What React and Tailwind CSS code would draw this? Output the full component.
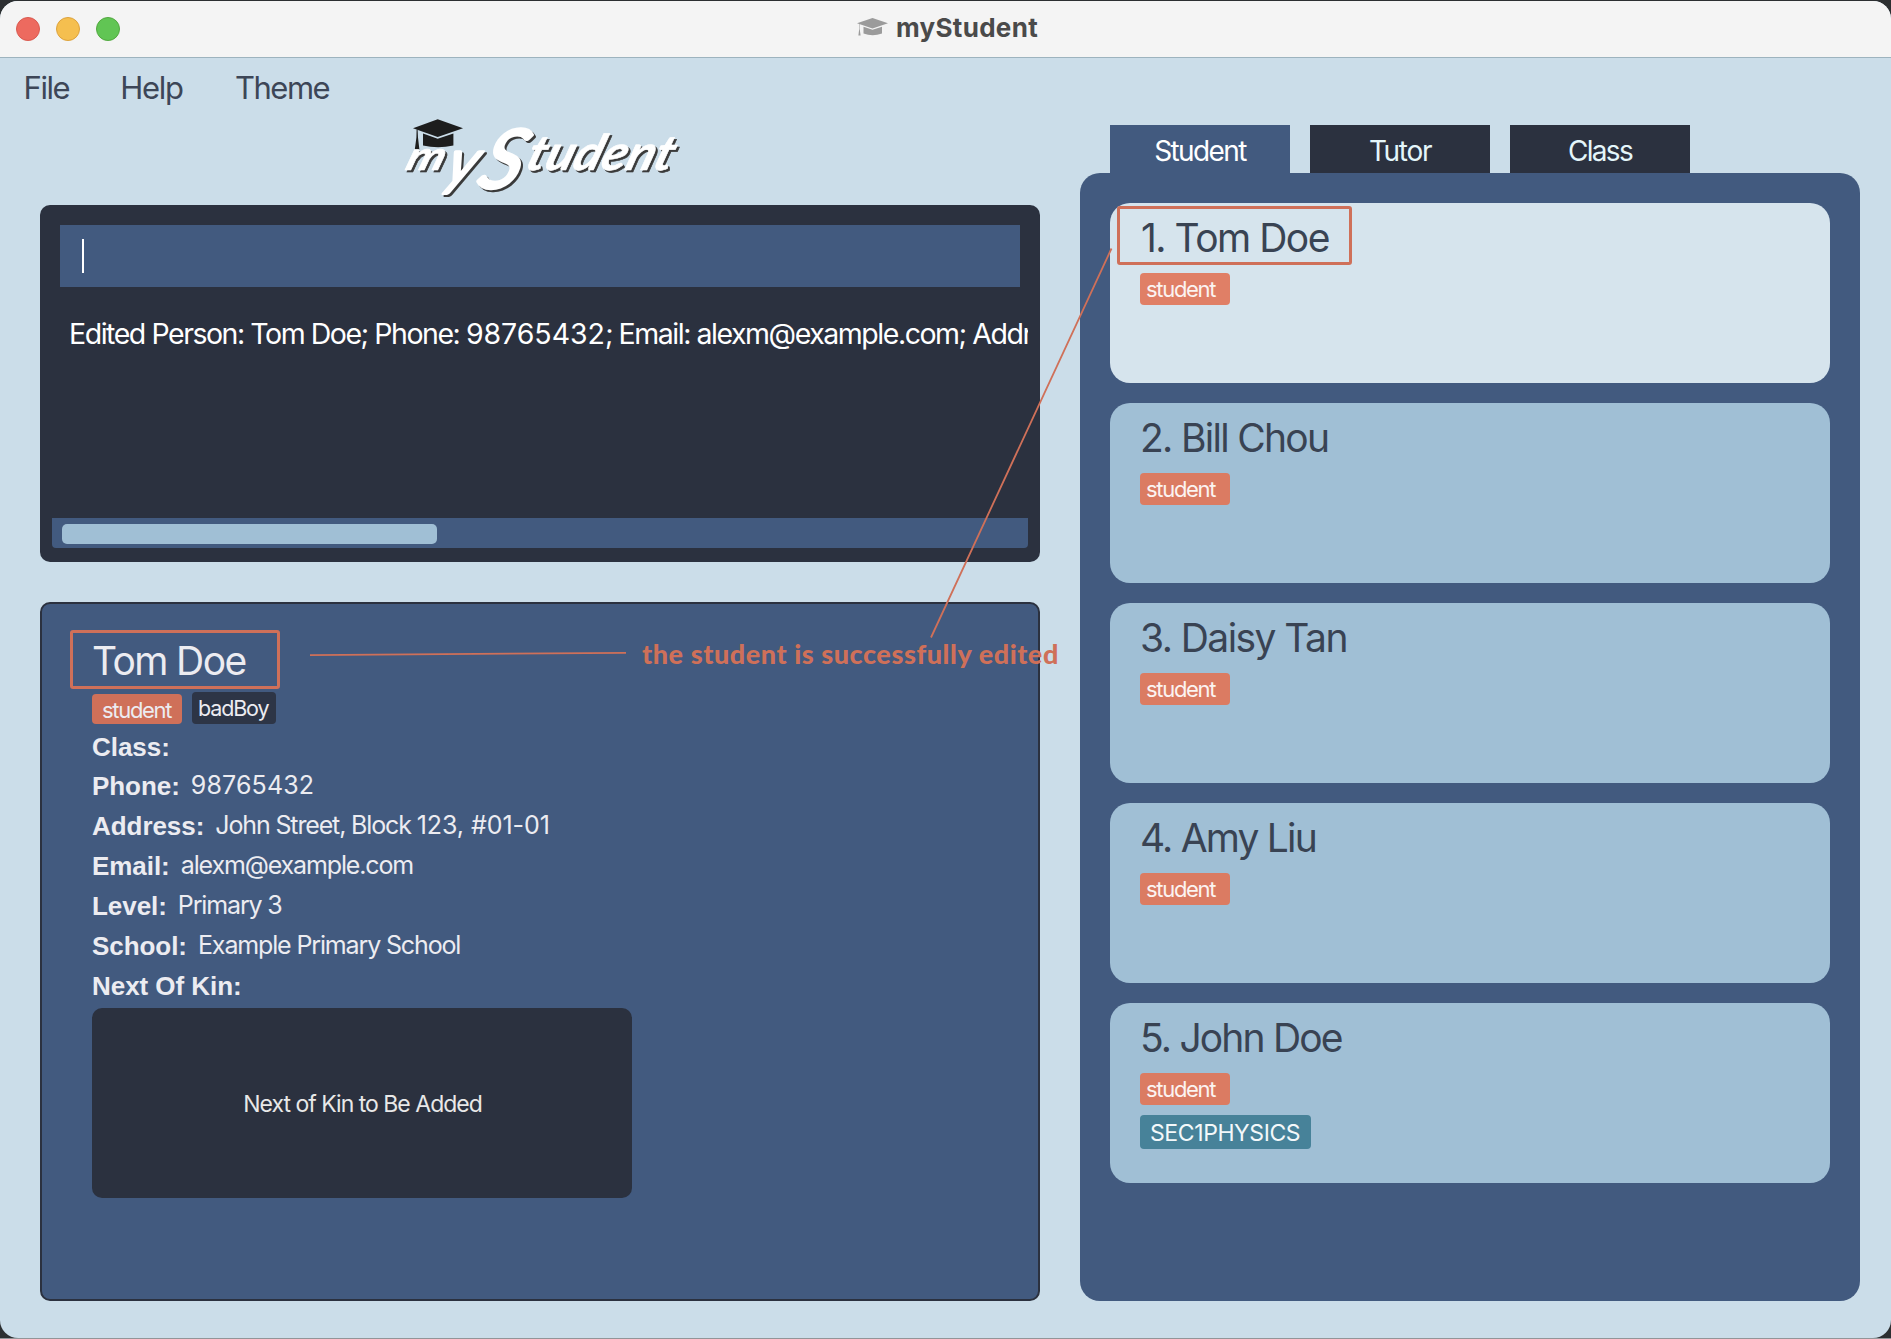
const people = [
  { name: "1. Tom Doe", tracking: "tracking-[-1.5px] pl-px", selected: true },
  { name: "2. Bill Chou", tracking: "tracking-[-1.7px]" },
  { name: "3. Daisy Tan", tracking: "tracking-[-1.56px]" },
  { name: "4. Amy Liu", tracking: "tracking-[-1.8px]" },
  { name: "5. John Doe", tracking: "tracking-[-1.83px]", subject: "SEC1PHYSICS" },
];

function TitleBar() {
  return (
    <header className="relative flex h-[57px] items-center border-b border-[#9db3be] bg-[#f4f4f4]">
      <div className="flex gap-4 pl-4">
        <span className="size-6 rounded-full border border-[#d95a50] bg-[#ed6a5f]" />
        <span className="size-6 rounded-full border border-[#dca23d] bg-[#f5bf4f]" />
        <span className="size-6 rounded-full border border-[#52a83f] bg-[#61c554]" />
      </div>
      <div className="ml-[737px] flex items-center">
        <svg className="-mt-1 h-[18px] w-[31px]" viewBox="0 0 31 18">
          <path d="M15.5 0 31 5.2 15.5 10.6 0 5.2Z" fill="#9b9b9b" />
          <path d="M6.5 8.7 15.5 11.8 25 8.7V15.6Q15.5 18.8 6.5 15.6Z" fill="#9b9b9b" />
          <path d="M2.7 6V11L3.6 17.6H1.4L2.2 11V6Z" fill="#9b9b9b" />
        </svg>
        <h1 className="-mt-0.5 ml-2 text-[26px] leading-9 font-bold tracking-[0.3px] text-[#4a4a4a]">myStudent</h1>
      </div>
    </header>
  );
}

function Logo() {
  return (
    <svg className="ml-[360px] h-[87px] w-[290px] overflow-visible" viewBox="400 118 290 87">
      <g fill="#1d1d1d">
        <path d="M437.7 119.2 463 128.3 437.7 137 413 128.3Z" />
        <path d="M423 133.4 437.7 138.8 453.4 133.4V145.6Q438 149 423 145.6Z" />
        <path d="M416.6 129.5H417.6L418 137.5 419.4 149.5H414.8L416.4 137.5Z" />
      </g>
      <g
        fontFamily="Lato, sans-serif"
        fontStyle="italic"
        fontWeight="700"
        fill="#fff"
        stroke="#fff"
        strokeWidth="0.6"
        strokeLinejoin="round"
        style={{ filter: "drop-shadow(2px 2px 0.4px #3a3a3a)" }}
      >
        <text transform="translate(404 170) skewX(-18)" fontSize="40">
          <tspan textLength="38" lengthAdjust="spacingAndGlyphs">m</tspan>
          <tspan x="43" dy="13" fontSize="62" fontWeight="400" strokeWidth="2.5">y</tspan>
        </text>
        <text transform="translate(475 188) skewX(-18)">
          <tspan fontSize="82" fontWeight="400" strokeWidth="3">S</tspan>
          <tspan x="43" dy="-18" fontSize="49" textLength="146" lengthAdjust="spacingAndGlyphs">tudent</tspan>
        </text>
      </g>
    </svg>
  );
}

function CommandPanel() {
  return (
    <section className="h-[357px] rounded-[10px] bg-[#2b313f] pt-5">
      <div className="mx-5 h-[62px] bg-[#425a7f] pt-3.5 pl-[22px]">
        <div className="h-[34px] w-0.5 bg-white" />
      </div>
      <div className="mx-3 h-[231px] overflow-hidden pt-[27px] pl-[17px]">
        <p className="text-[28.5px] leading-10 tracking-[-1.46px] whitespace-pre text-white">
          Edited Person: Tom Doe; Phone: <span className="tracking-[-0.05px]">98765432</span>; Email: alexm@example.com; Address: John Street
        </p>
      </div>
      <div className="mx-3 h-[30px] rounded-b-[4px] bg-[#425a7f] pt-1.5 pl-2.5">
        <div className="h-5 w-[375px] rounded-[5px] bg-[#a0bfd5]" />
      </div>
    </section>
  );
}

function Field({ label, children, first }) {
  return (
    <div className={first ? "flex h-[39px] gap-[11px]" : "flex h-10 gap-[11px]"}>
      <span className="font-['Liberation_Sans',Arial,sans-serif] text-[26px] leading-10 font-bold tracking-[-0.05px]">{label}</span>
      <span className="text-[25px] leading-[38px] tracking-[-1.14px] whitespace-pre">{children}</span>
    </div>
  );
}

function DetailPanel() {
  return (
    <section className="h-[699px] rounded-[10px] border-2 border-[#2b313f] bg-[#425a7f] pt-[34px] pl-[50px] text-[#ececf1]">
      <h2 className="h-11 text-[39px] leading-[45px] tracking-[-1.63px]">Tom Doe</h2>
      <div className="mt-2.5 flex h-8 items-end gap-2.5 text-[22px]">
        <span className="h-[30px] w-[90px] rounded-[4px] bg-[#cf7059] pt-0.5 pl-2.5 leading-7 tracking-[-1.3px]">student</span>
        <span className="h-8 w-[84px] rounded-[4px] bg-[#2d3546] pl-1.5 text-[21.5px] leading-8 tracking-[-1.15px]">badBoy</span>
      </div>
      <div className="pt-[3px]">
        <Field label="Class:" first />
        <Field label="Phone:"><span className="tracking-[0.14px]">98765432</span></Field>
        <Field label="Address:">John Street, Block <span className="tracking-[-0.05px]">123, #01-01</span></Field>
        <Field label="Email:">alexm@example.com</Field>
        <Field label="Level:">Primary 3</Field>
        <Field label="School:">Example Primary School</Field>
        <Field label="Next Of Kin:" />
      </div>
      <div className="mt-0.5 flex h-[190px] w-[540px] items-center justify-center rounded-[10px] bg-[#2b313f]">
        <span className="pt-0.5 pl-px text-[23px] leading-8 tracking-[-0.99px] text-[#e8e8e8]">Next of Kin to Be Added</span>
      </div>
    </section>
  );
}

function PersonCard({ person }) {
  return (
    <li className={person.selected ? "h-[180px] rounded-[20px] bg-[#d6e4ed] pt-3 pl-[30px]" : "h-[180px] rounded-[20px] bg-[#a0bfd5] pt-3 pl-[30px]"}>
      <h3 className={"h-11 text-[39px] leading-[46px] text-[#394353] " + person.tracking}>{person.name}</h3>
      <div
        className={
          "mt-3.5 h-8 w-[90px] rounded-[4px] pl-1.5 text-[22px] leading-8 tracking-[-1.3px] text-[#fbf3f1] " +
          (person.selected ? "bg-[#e07f66]" : "bg-[#db7b62]")
        }
      >
        student
      </div>
      {person.subject && (
        <div className="mt-2.5 h-[34px] w-[171px] rounded-[4px] bg-[#478299] pl-2.5 text-[23px] leading-[36px] tracking-[-0.4px] text-[#f3f8fa]">
          {person.subject}
        </div>
      )}
    </li>
  );
}

function PeoplePanel() {
  return (
    <div className="w-[780px] pt-[7px]">
      <nav className="flex gap-5 pl-[30px] text-center text-[28px] leading-[53px]">
        <span className="h-12 w-[180px] bg-[#425a7f] tracking-[-1.62px] text-white">Student</span>
        <span className="h-12 w-[180px] bg-[#2b313f] tracking-[-1.31px] text-[#e4f6fa]">Tutor</span>
        <span className="h-12 w-[180px] bg-[#2b313f] tracking-[-1.68px] text-[#e4f6fa]">Class</span>
      </nav>
      <ul className="flex h-[1128px] flex-col gap-5 rounded-[20px] bg-[#425a7f] p-[30px]">
        {people.map((p) => (
          <PersonCard key={p.name} person={p} />
        ))}
      </ul>
    </div>
  );
}

function Annotations() {
  return (
    <>
      <div className="absolute top-[206px] left-[1117px] h-[59px] w-[235px] rounded-[3px] border-3 border-[#cf7059]" />
      <div className="absolute top-[630px] left-[70px] h-[59px] w-[210px] rounded-[3px] border-3 border-[#cf7059]" />
      <svg className="absolute top-0 left-0 h-[700px] w-[1200px]" viewBox="0 0 1200 700" stroke="#cf7059" strokeWidth="1.8">
        <path d="M310 655.2 626 652.8M931 637.5 1111.5 248.5" />
      </svg>
      <p className="absolute top-[636px] left-[642px] font-[Lato] text-[27px] leading-9 font-black tracking-[0.56px] whitespace-nowrap text-[#cf7059]">
        the student is successfully edited
      </p>
    </>
  );
}

export default function App() {
  return (
    <div className="relative h-[1339px] w-[1891px] overflow-hidden bg-[#2c2f31] pt-px font-[Inter,sans-serif]">
      <div className="h-[1337px] overflow-hidden rounded-[18px] bg-[#cbdde9]">
        <TitleBar />
        <nav className="flex h-[60px] pl-[23.5px] text-[31px] leading-[60px] text-[#3d4657]">
          <span className="w-[96.8px] tracking-[-1.4px]">File</span>
          <span className="w-[114.7px] tracking-[-1.3px]">Help</span>
          <span className="tracking-[-1.5px]">Theme</span>
        </nav>
        <div className="flex gap-10 pl-10">
          <div className="w-[1000px]">
            <Logo />
            <CommandPanel />
            <div className="h-10" />
            <DetailPanel />
          </div>
          <PeoplePanel />
        </div>
      </div>
      <div className="h-px bg-[#929598]" />
      <Annotations />
    </div>
  );
}
